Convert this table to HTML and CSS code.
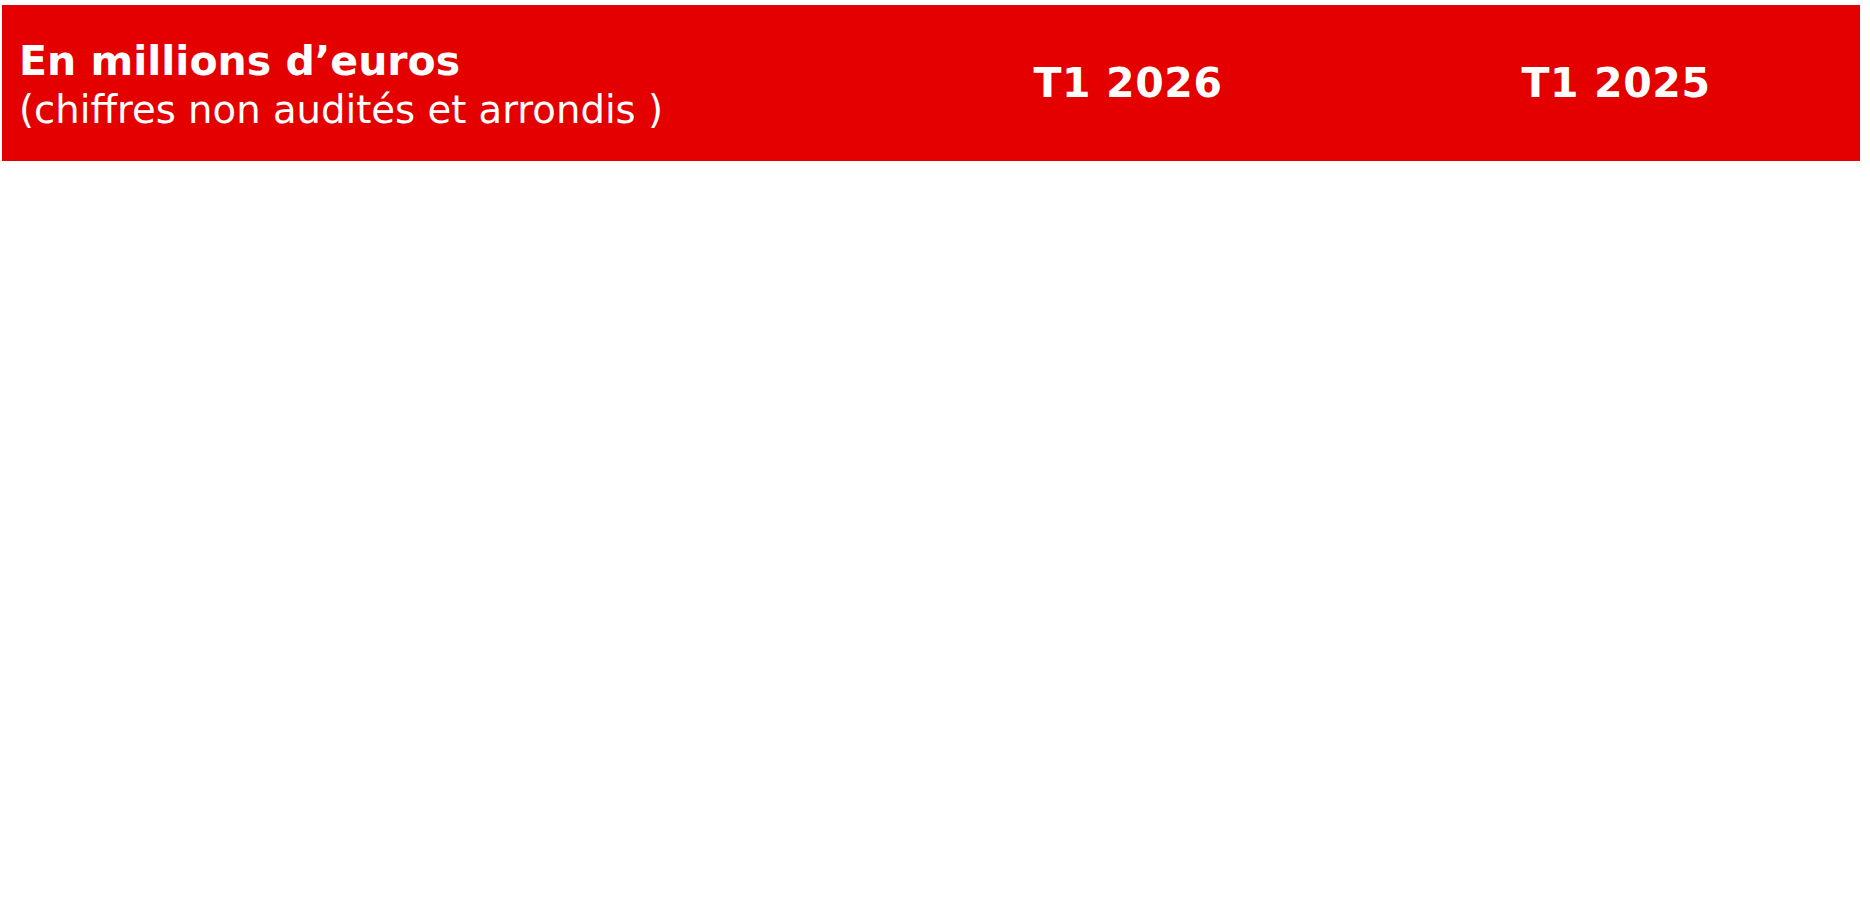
FILE: index.html
```html
<!DOCTYPE html>
<html lang="fr">
<head>
  <meta charset="UTF-8">
  <meta name="viewport" content="width=device-width, initial-scale=1.0">
  <title>Chiffres T1 2026</title>
  <link rel="stylesheet" href="styles.css">
</head>
<body>

  <div class="results-table">
    <div class="results-header">
      <div class="header-label">
        <div class="label-title">En millions d’euros</div>
        <div class="label-note">(chiffres non audités et arrondis )</div>
      </div>
      <div class="header-period">T1 2026</div>
      <div class="header-period">T1 2025</div>
    </div>
  </div>

</body>
</html>
```

FILE: styles.css
```css
body {
  margin: 0;
  font-family: "DejaVu Sans", "Liberation Sans", Arial, sans-serif;
  background-color: #fff;
  color: #fff;
}

.results-table {
  width: 1858px;
  margin: 5px 0 0 2px;
}

.results-header {
  display: grid;
  grid-template-columns: 1fr 488px 488px;
  align-items: center;
  background-color: #e50000;
  height: 156px;
}

.header-label {
  padding: 0 17px;
  margin-top: 6px;
}

.label-title {
  font-size: 41px;
  font-weight: bold;
  line-height: 48px;
}

.label-note {
  font-size: 38.6px;
  line-height: 50px;
}

.header-period {
  font-size: 41px;
  font-weight: bold;
  line-height: 48px;
  letter-spacing: 0.6px;
  text-align: center;
}
```
